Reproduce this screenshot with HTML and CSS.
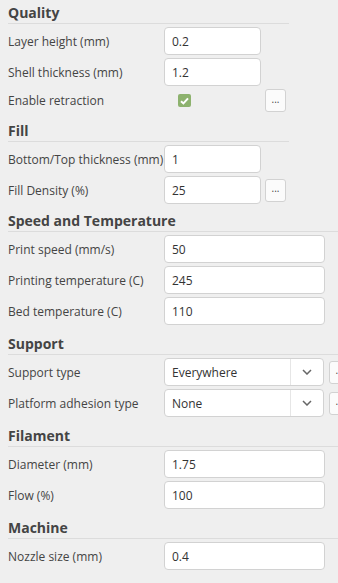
FILE: index.html
```html
<!DOCTYPE html>
<html lang="en">
<head>
<meta charset="UTF-8">
<title>Print settings</title>
<link rel="stylesheet" href="styles.css">
</head>
<body>
<div class="panel">

  <section class="group narrow">
    <h3>Quality</h3>
    <div class="rows">
      <div class="row">
        <label for="layerHeight">Layer height (mm)</label>
        <input class="field short" id="layerHeight" value="0.2">
      </div>
      <div class="row">
        <label for="shellThickness">Shell thickness (mm)</label>
        <input class="field short" id="shellThickness" value="1.2">
      </div>
      <div class="row row-check">
        <label>Enable retraction</label>
        <span class="check-cell">
          <span class="check">
            <svg width="9" height="8" viewBox="0 0 9 8"><path d="M1 4.2 L3.4 6.4 L8 1.4" fill="none" stroke="#fff" stroke-width="2"/></svg>
          </span>
        </span>
        <button class="more">...</button>
      </div>
    </div>
  </section>

  <section class="group narrow">
    <h3>Fill</h3>
    <div class="rows">
      <div class="row">
        <label for="bottomTop">Bottom/Top thickness (mm)</label>
        <input class="field short" id="bottomTop" value="1">
      </div>
      <div class="row">
        <label for="fillDensity">Fill Density (%)</label>
        <input class="field short" id="fillDensity" value="25">
        <button class="more">...</button>
      </div>
    </div>
  </section>

  <section class="group wide tight">
    <h3>Speed and Temperature</h3>
    <div class="rows">
      <div class="row">
        <label for="printSpeed">Print speed (mm/s)</label>
        <input class="field long" id="printSpeed" value="50">
      </div>
      <div class="row">
        <label for="printTemp">Printing temperature (C)</label>
        <input class="field long" id="printTemp" value="245">
      </div>
      <div class="row">
        <label for="bedTemp">Bed temperature (C)</label>
        <input class="field long" id="bedTemp" value="110">
      </div>
    </div>
  </section>

  <section class="group wide">
    <h3>Support</h3>
    <div class="rows">
      <div class="row">
        <label>Support type</label>
        <div class="select">
          <span class="select-value">Everywhere</span>
          <span class="select-arrow"><svg width="10" height="6" viewBox="0 0 10 6"><path d="M1 1 L5 5 L9 1" fill="none" stroke="#666" stroke-width="1.5"/></svg></span>
        </div>
        <button class="more more-wide">...</button>
      </div>
      <div class="row">
        <label>Platform adhesion type</label>
        <div class="select">
          <span class="select-value">None</span>
          <span class="select-arrow"><svg width="10" height="6" viewBox="0 0 10 6"><path d="M1 1 L5 5 L9 1" fill="none" stroke="#666" stroke-width="1.5"/></svg></span>
        </div>
        <button class="more more-wide">...</button>
      </div>
    </div>
  </section>

  <section class="group wide">
    <h3>Filament</h3>
    <div class="rows">
      <div class="row">
        <label for="diameter">Diameter (mm)</label>
        <input class="field long" id="diameter" value="1.75">
      </div>
      <div class="row">
        <label for="flow">Flow (%)</label>
        <input class="field long" id="flow" value="100">
      </div>
    </div>
  </section>

  <section class="group wide">
    <h3>Machine</h3>
    <div class="rows">
      <div class="row">
        <label for="nozzle">Nozzle size (mm)</label>
        <input class="field long" id="nozzle" value="0.4">
      </div>
    </div>
  </section>

</div>
</body>
</html>
```

FILE: styles.css
```css
html, body {
  overflow: hidden;
}

body {
  margin: 0;
  background-color: #efefef;
  font-family: "Open Sans", Arial, sans-serif;
  font-size: 12px;
  color: #444;
}

.panel {
  width: 330px;
  padding-left: 8px;
  overflow: hidden;
}

.group + .group {
  margin-top: 3px;
}

.group.tight {
  margin-top: 1px;
}

.group.narrow {
  width: 281px;
}

.group.wide {
  width: 380px;
}

.group h3 {
  margin: 0;
  padding-top: 3px;
  line-height: 20px;
  font-size: 14px;
  font-weight: bold;
  color: #444;
  border-bottom: 1px solid #dcdcdc;
}

.rows {
  display: flex;
  flex-direction: column;
  gap: 3px;
  padding: 3px 0;
}

.row {
  display: flex;
  align-items: center;
  height: 28px;
}

.row-check {
  height: 23px;
}

.row label {
  flex: none;
  width: 156px;
  white-space: nowrap;
}

.field {
  box-sizing: border-box;
  height: 28px;
  padding: 0 7px;
  border: 1px solid #d2d2d2;
  border-radius: 4px;
  background-color: white;
  font-family: inherit;
  font-size: 12px;
  color: #333;
  outline: none;
}

.field.short {
  width: 97px;
}

.field.long {
  width: 161px;
}

.check-cell {
  flex: none;
  width: 97px;
  display: flex;
  align-items: center;
  padding-left: 14px;
  box-sizing: border-box;
}

.check {
  display: flex;
  align-items: center;
  justify-content: center;
  width: 13px;
  height: 13px;
  border-radius: 2px;
  background-color: #8db26e;
}

.more {
  flex: none;
  box-sizing: border-box;
  width: 21px;
  height: 23px;
  margin-left: 4px;
  padding: 0 0 4px;
  border: 1px solid #d2d2d2;
  border-radius: 3px;
  background-color: #fbfbfb;
  font-family: inherit;
  font-size: 10px;
  color: #444;
}

.more-wide {
  margin-left: 5px;
}

.select {
  flex: none;
  box-sizing: border-box;
  width: 160px;
  height: 28px;
  display: flex;
  border: 1px solid #d2d2d2;
  border-radius: 4px;
  background-color: white;
  color: #333;
}

.select-value {
  flex: 1;
  display: flex;
  align-items: center;
  padding-left: 7px;
}

.select-arrow {
  width: 32px;
  display: flex;
  align-items: center;
  justify-content: center;
  border-left: 1px solid #e6e6e6;
}
```
